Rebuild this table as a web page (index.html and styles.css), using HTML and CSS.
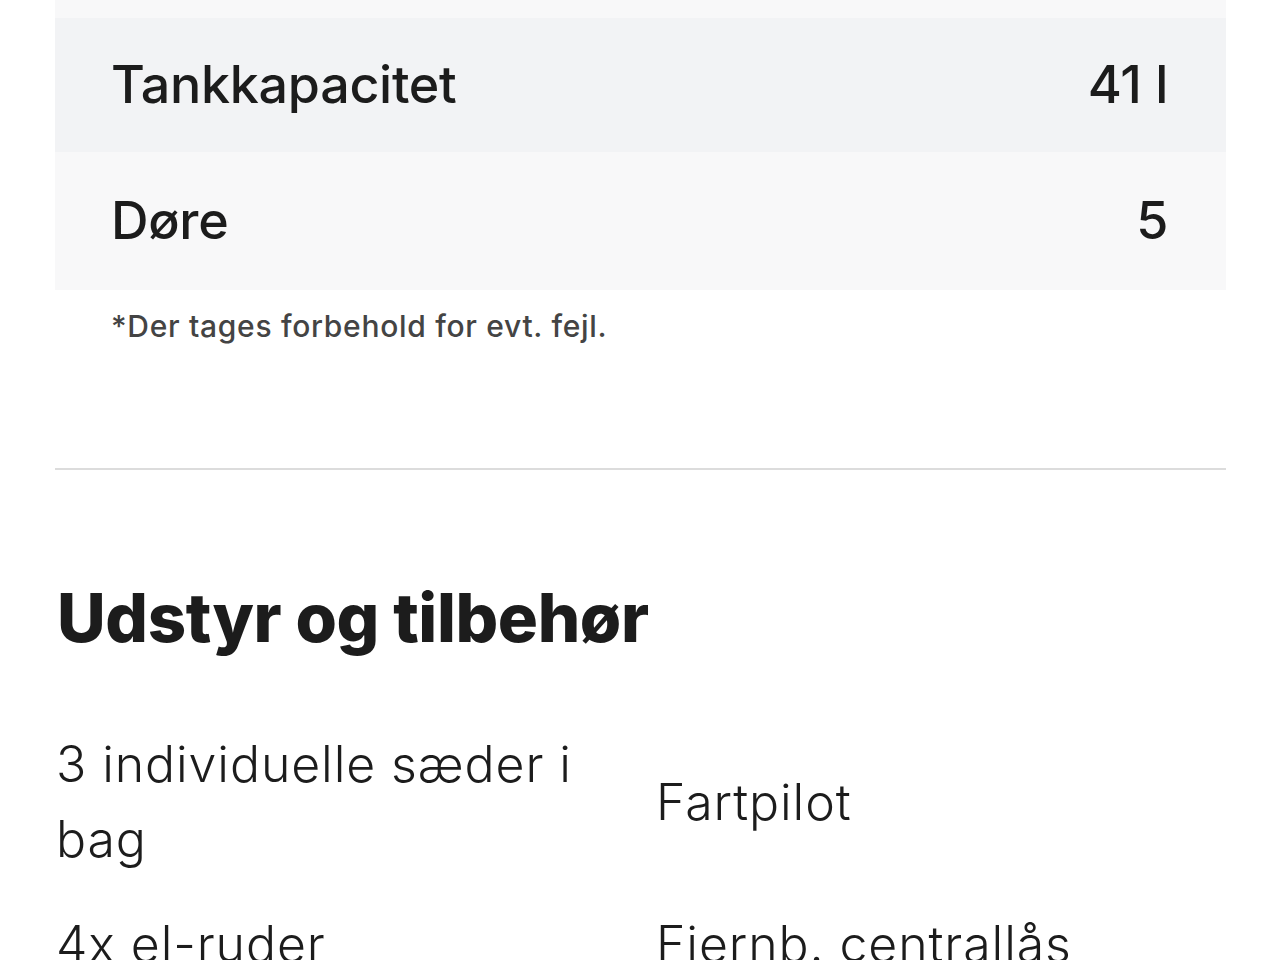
FILE: index.html
```html
<!DOCTYPE html>
<html lang="da">
<head>
<meta charset="utf-8">
<title>Specifikationer</title>
<link rel="stylesheet" href="styles.css">
</head>
<body>
<main class="page">
  <section class="specs">
    <div class="spec-strip"></div>
    <div class="spec-row spec-row--dark">
      <span class="spec-label">Tankkapacitet</span>
      <span class="spec-value">41 l</span>
    </div>
    <div class="spec-row spec-row--light">
      <span class="spec-label">Døre</span>
      <span class="spec-value">5</span>
    </div>
    <p class="footnote">*Der tages forbehold for evt. fejl.</p>
  </section>
  <hr class="divider">
  <section class="equipment">
    <h2 class="equipment-title">Udstyr og tilbehør</h2>
    <ul class="equipment-list">
      <li>3 individuelle sæder i bag</li>
      <li>Fartpilot</li>
      <li>4x el-ruder</li>
      <li>Fjernb. centrallås</li>
    </ul>
  </section>
</main>
</body>
</html>
```

FILE: styles.css
```css
* { box-sizing: border-box; }

html, body {
  margin: 0;
  padding: 0;
  background: #ffffff;
}

body {
  font-family: Inter, "Noto Sans", "Liberation Sans", sans-serif;
  color: #1c1c1c;
  overflow: hidden;
}

.page {
  padding: 0 54px 0 55px;
}

.specs {
  display: flex;
  flex-direction: column;
}

.spec-strip {
  height: 18px;
  background: #f8f8f9;
}

.spec-row {
  display: flex;
  justify-content: space-between;
  align-items: center;
  padding: 0 58px 0 56px;
  font-size: 52px;
  font-weight: 500;
  line-height: 62px;
  letter-spacing: -0.3px;
}

.spec-row--dark {
  background: #f2f3f5;
  height: 134px;
}

.spec-row--light {
  background: #f8f8f9;
  height: 138px;
}

.footnote {
  margin: 16px 0 0 56px;
  font-size: 30px;
  line-height: 40px;
  font-weight: 500;
  letter-spacing: 0.7px;
  color: #444444;
}

.divider {
  margin: 122px 0 0;
  border: 0;
  height: 2px;
  background: #dcdcdc;
}

.equipment-title {
  margin: 108px 0 0 2px;
  font-size: 67px;
  line-height: 80px;
  font-weight: 800;
  letter-spacing: -0.4px;
  color: #1c1c1c;
}

.equipment-list {
  list-style: none;
  margin: 69px 0 0 1px;
  padding: 0;
  display: grid;
  grid-template-columns: 1fr 1fr;
  column-gap: 30px;
  row-gap: 30px;
  align-items: center;
  font-size: 50px;
  line-height: 75px;
  font-weight: 300;
  letter-spacing: 0.9px;
}
```
